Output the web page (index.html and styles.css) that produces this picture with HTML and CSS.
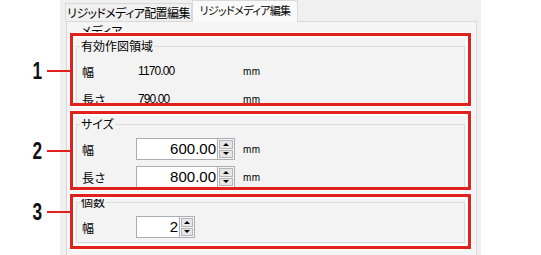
FILE: index.html
```html
<!DOCTYPE html>
<html lang="ja">
<head>
<meta charset="utf-8">
<link rel="stylesheet" href="styles.css">
</head>
<body>
<div class="panel">
  <div class="tabs">
    <div class="tab tab-other">リジッドメディア配置編集</div>
    <div class="tab tab-active">リジッドメディア編集</div>
  </div>
  <div class="pane">
    <div class="media-legend">メディア</div>

    <section class="cbox box1">
      <div class="callout"><span class="num">1</span><span class="leader"></span></div>
      <div class="gb-area">
        <fieldset class="gb">
          <legend>有効作図領域</legend>
          <div class="rows">
            <div class="row"><span class="lbl">幅</span><span class="val">1170.00</span><span class="unit">mm</span></div>
            <div class="row"><span class="lbl">長さ</span><span class="val">790.00</span><span class="unit">mm</span></div>
          </div>
        </fieldset>
      </div>
    </section>

    <section class="cbox box2">
      <div class="callout"><span class="num">2</span><span class="leader"></span></div>
      <div class="gb-area">
        <fieldset class="gb">
          <legend>サイズ</legend>
          <div class="rows">
            <div class="row">
              <span class="lbl">幅</span>
              <div class="num-input"><div class="field">600.00</div><div class="spin"><span class="up"></span><span class="down"></span></div></div>
              <span class="unit">mm</span>
            </div>
            <div class="row">
              <span class="lbl">長さ</span>
              <div class="num-input"><div class="field">800.00</div><div class="spin"><span class="up"></span><span class="down"></span></div></div>
              <span class="unit">mm</span>
            </div>
          </div>
        </fieldset>
      </div>
    </section>

    <section class="cbox box3">
      <div class="callout"><span class="num">3</span><span class="leader"></span></div>
      <div class="gb-area">
        <fieldset class="gb">
          <legend>個数</legend>
          <div class="rows">
            <div class="row">
              <span class="lbl">幅</span>
              <div class="num-input small"><div class="field">2</div><div class="spin"><span class="up"></span><span class="down"></span></div></div>
              <span class="unit"></span>
            </div>
          </div>
        </fieldset>
      </div>
    </section>
  </div>
</div>
</body>
</html>
```
FILE: styles.css
```css
html, body {
  margin: 0;
  padding: 0;
}
body {
  width: 541px;
  height: 255px;
  overflow: hidden;
  background: #ffffff;
  color: #000;
  font-family: "Noto Sans CJK JP", sans-serif;
  font-size: 12px;
}
.panel {
  margin-left: 60px;
  width: 421px;
  height: 255px;
  background: #f0f0f0;
}
.tabs {
  display: flex;
  align-items: flex-end;
  height: 21px;
  padding-left: 5px;
  position: relative;
  z-index: 2;
}
.tab {
  box-sizing: border-box;
  border: 1px solid #d9d9d9;
  border-bottom: none;
  text-align: center;
  white-space: nowrap;
  overflow: hidden;
  font-feature-settings: "palt";
}
.tab-other {
  width: 127px;
  height: 18px;
  line-height: 18px;
  font-size: 12px;
  letter-spacing: -0.6px;
  background: #f0f0f0;
}
.tab-active {
  width: 106px;
  height: 22px;
  margin-bottom: -1px;
  line-height: 19px;
  font-size: 11px;
  letter-spacing: -0.6px;
  background: #fafafa;
}
.pane {
  margin-left: 6px;
  width: 411px;
  height: 234px;
  box-sizing: border-box;
  border: 1px solid #d9d9d9;
  border-bottom: none;
  background: #f5f5f5;
  padding-left: 3px;
}
.media-legend {
  margin-top: 2px;
  height: 9px;
  overflow: hidden;
  line-height: 14px;
  padding-left: 11px;
  font-feature-settings: "palt";
}
.cbox {
  position: relative;
  width: 401px;
  box-sizing: border-box;
  border: 3px solid #e3211c;
  background: #ffffff;
  padding: 2px;
  box-shadow: 0 0 0 1px #ffffff;
}
.box1 { height: 73px; padding-bottom: 0; }
.box2 { height: 79px; margin-top: 5px; padding-bottom: 0; }
.box3 { height: 55px; margin-top: 4px; }
.gb-area {
  height: 100%;
  box-sizing: border-box;
  overflow: hidden;
  background: #f3f3f3;
  padding: 0 1px;
}
.gb {
  margin: 2px 0 0;
  padding: 0 0 1px 5px;
  border: 1px solid #dcdcdc;
  min-width: 0;
}
.box3 .gb { margin-top: -3px; }
.gb legend {
  padding: 0 1px;
  margin-left: -2px;
  line-height: 12px;
  font-size: 12px;
  font-feature-settings: "palt";
}
.rows {
  padding-top: 5px;
}
.row {
  display: grid;
  grid-template-columns: 54px 107px auto;
  align-items: center;
  height: 28px;
}
.lbl {
  font-size: 12px;
}
.val {
  padding-left: 2px;
  font-family: "Liberation Sans", sans-serif;
  font-size: 12px;
  letter-spacing: -0.9px;
}
.unit {
  font-family: "Liberation Sans", sans-serif;
  font-size: 10px;
  letter-spacing: 0.3px;
}
.num-input {
  display: flex;
  width: 99px;
  height: 22px;
}
.num-input.small {
  width: 59px;
}
.field {
  flex: 1;
  box-sizing: border-box;
  border: 1px solid #abadb3;
  background: #ffffff;
  text-align: right;
  padding-right: 1px;
  font-family: "Liberation Sans", sans-serif;
  font-size: 15px;
  line-height: 20px;
}
.spin {
  width: 17px;
  box-sizing: border-box;
  display: flex;
  flex-direction: column;
  gap: 1px;
  padding: 1px;
  border: 1px solid #abadb3;
  border-left: none;
  background: #f7f7f7;
}
.small .spin {
  width: 15px;
}
.spin span {
  flex: 1;
  border: 1px solid #b4b4b4;
  background: #e6e6e6;
  display: flex;
  align-items: center;
  justify-content: center;
}
.spin span::after {
  content: "";
  width: 0;
  height: 0;
  border-left: 3px solid transparent;
  border-right: 3px solid transparent;
}
.spin .up::after { border-bottom: 3px solid #000; }
.spin .down::after { border-top: 3px solid #000; }
.callout {
  position: absolute;
  right: calc(100% + 3px);
  height: 20px;
  display: flex;
  align-items: center;
}
.box1 .callout { top: 25px; }
.box2 .callout { top: 27px; }
.box3 .callout { top: 5px; }
.num {
  display: inline-block;
  width: 14px;
  text-align: right;
  font-family: "Liberation Sans", sans-serif;
  font-weight: bold;
  font-size: 24px;
  line-height: 20px;
  color: #111;
  transform: scaleX(0.72);
  transform-origin: right center;
}
.leader {
  width: 23px;
  height: 2px;
  margin-left: 5px;
  background: #e3211c;
}
```
